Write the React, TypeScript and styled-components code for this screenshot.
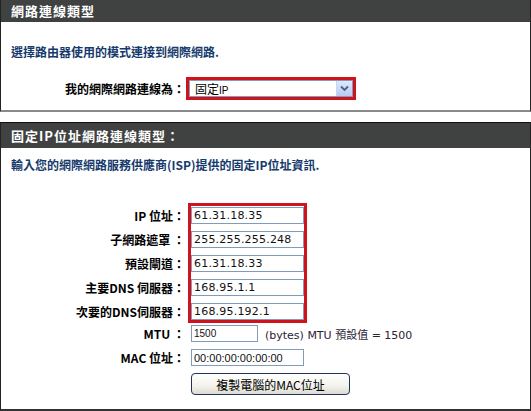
import styled, { createGlobalStyle } from "styled-components";

const GlobalStyle = createGlobalStyle`
  body {
    margin: 0;
    background: #ffffff;
    font-family: "Noto Sans CJK TC", "DejaVu Sans", sans-serif;
  }
`;

const Page = styled.div`
  width: 531px;
  height: 411px;
  overflow: hidden;
`;

const Panel = styled.section<{ $first?: boolean }>`
  border-left: 1px solid #222;
  border-right: 1px solid #222;
  border-bottom: 2px solid ${(p) => (p.$first ? "#8a8a8a" : "#333")};
  margin-top: ${(p) => (p.$first ? "0" : "10px")};
  border-top: ${(p) => (p.$first ? "none" : "1px solid #111")};
`;

const Header = styled.h2<{ $h: number }>`
  margin: 0;
  height: ${(p) => p.$h}px;
  background: #404242;
  color: #ffffff;
  font-size: 13px;
  font-weight: 700;
  line-height: ${(p) => p.$h}px;
  padding-left: 10px;
  letter-spacing: 1px;
`;

const Intro = styled.p<{ $top: number }>`
  margin: 0;
  padding: ${(p) => p.$top}px 0 0 10px;
  color: #163a6c;
  font-size: 12px;
  font-weight: 700;
  line-height: 16px;
`;

const SelectRow = styled.div`
  display: flex;
  align-items: center;
  margin: 17px 0 10px;
`;

const Label = styled.div<{ $w?: number }>`
  width: ${(p) => (p.$w ? `${p.$w}px` : "auto")};
  flex-shrink: 0;
  text-align: right;
  font-size: 12px;
  font-weight: 700;
  color: #000;
  line-height: 17px;
  height: 17px;
  white-space: nowrap;
`;

const RedBox = styled.div`
  border: 3px solid #d0121c;
  margin-left: 1px;
`;

const SelectBox = styled.div`
  width: 164px;
  height: 17px;
  box-sizing: border-box;
  border: 1px solid #7f9db9;
  display: flex;
  align-items: center;
  justify-content: space-between;
  padding-left: 5px;
  font-size: 12px;
  color: #000;
`;

const SmallLatin = styled.span`
  font-family: "Liberation Sans", sans-serif;
  font-size: 10px;
`;

const ArrowButton = styled.div`
  width: 15px;
  height: 15px;
  background: linear-gradient(#dfe8fb, #b8cbf3);
  border-left: 1px solid #c5d5f5;
  display: flex;
  align-items: center;
  justify-content: center;
`;

const Form = styled.div`
  display: grid;
  grid-template-columns: 184px auto;
  column-gap: 3px;
  justify-content: start;
  margin-top: 30px;
  padding-bottom: 14px;
`;

const LabelStack = styled.div`
  display: flex;
  flex-direction: column;
  gap: 7px;
  padding-top: 4px;
`;

const FieldGroup = styled.div`
  border: 3px solid #d0121c;
  padding-top: 1px;
  display: flex;
  flex-direction: column;
  gap: 7px;
  width: 113px;
`;

const Cell = styled.div<{ $top: number; $indent?: number }>`
  margin-top: ${(p) => p.$top}px;
  padding-left: ${(p) => p.$indent ?? 0}px;
  display: flex;
  align-items: center;
  justify-content: ${(p) => (p.$indent === undefined ? "flex-end" : "flex-start")};
`;

const TextInput = styled.div<{ $w: number; $font?: "verdana" | "tahoma" | "small" }>`
  width: ${(p) => p.$w}px;
  height: 17px;
  box-sizing: border-box;
  border: 1px solid #7f9db9;
  padding-left: 2px;
  display: flex;
  align-items: center;
  color: #111;
  white-space: nowrap;
  font-family: ${(p) =>
    p.$font === "verdana" ? `"DejaVu Sans", sans-serif` : `"Liberation Sans", sans-serif`};
  font-size: ${(p) => (p.$font === "small" ? "10px" : "11px")};
  letter-spacing: ${(p) => (p.$font === "verdana" ? "0.2px" : "0")};
`;

const InlineNote = styled.span`
  margin-left: 7px;
  font-family: "DejaVu Sans", "Noto Sans CJK TC", sans-serif;
  font-size: 11px;
  color: #2a2235;
`;

const CopyButton = styled.button`
  width: 159px;
  height: 22px;
  border: 1px solid #1f3553;
  border-radius: 4px;
  background: linear-gradient(#ffffff, #f3f2ec 60%, #dcdad2);
  font-family: "Noto Sans CJK TC", sans-serif;
  font-size: 12px;
  color: #000;
  padding: 0;
  cursor: pointer;
`;

const ipRows = [
  { label: "IP 位址：", value: "61.31.18.35" },
  { label: "子網路遮罩 ：", value: "255.255.255.248" },
  { label: "預設閘道：", value: "61.31.18.33" },
  { label: "主要DNS 伺服器：", value: "168.95.1.1" },
  { label: "次要的DNS伺服器：", value: "168.95.192.1" },
];

export default function App() {
  return (
    <Page>
      <GlobalStyle />
      <Panel $first>
        <Header $h={22}>網路連線類型</Header>
        <Intro $top={22}>選擇路由器使用的模式連接到網際網路.</Intro>
        <SelectRow>
          <Label $w={184}>我的網際網路連線為：</Label>
          <RedBox>
            <SelectBox>
              <span>
                固定<SmallLatin>IP</SmallLatin>
              </span>
              <ArrowButton>
                <svg width="9" height="7" viewBox="0 0 9 7">
                  <path d="M1 1.5 L4.5 5 L8 1.5" fill="none" stroke="#4d6185" strokeWidth="1.8" />
                </svg>
              </ArrowButton>
            </SelectBox>
          </RedBox>
        </SelectRow>
      </Panel>

      <Panel>
        <Header $h={25}>固定IP位址網路連線類型：</Header>
        <Intro $top={9}>輸入您的網際網路服務供應商(ISP)提供的固定IP位址資訊.</Intro>
        <Form>
          <LabelStack>
            {ipRows.map((r) => (
              <Label key={r.label}>{r.label}</Label>
            ))}
          </LabelStack>
          <FieldGroup>
            {ipRows.map((r) => (
              <TextInput key={r.label} $w={113} $font="verdana">
                {r.value}
              </TextInput>
            ))}
          </FieldGroup>

          <Cell $top={2}>
            <Label>MTU ：</Label>
          </Cell>
          <Cell $top={2} $indent={3}>
            <TextInput $w={67} $font="small">1500</TextInput>
            <InlineNote>(bytes) MTU 預設值 = 1500</InlineNote>
          </Cell>

          <Cell $top={7}>
            <Label>MAC 位址：</Label>
          </Cell>
          <Cell $top={7} $indent={3}>
            <TextInput $w={113} $font="tahoma">00:00:00:00:00:00</TextInput>
          </Cell>

          <div />
          <Cell $top={7} $indent={3}>
            <CopyButton>複製電腦的MAC位址</CopyButton>
          </Cell>
        </Form>
      </Panel>
    </Page>
  );
}
